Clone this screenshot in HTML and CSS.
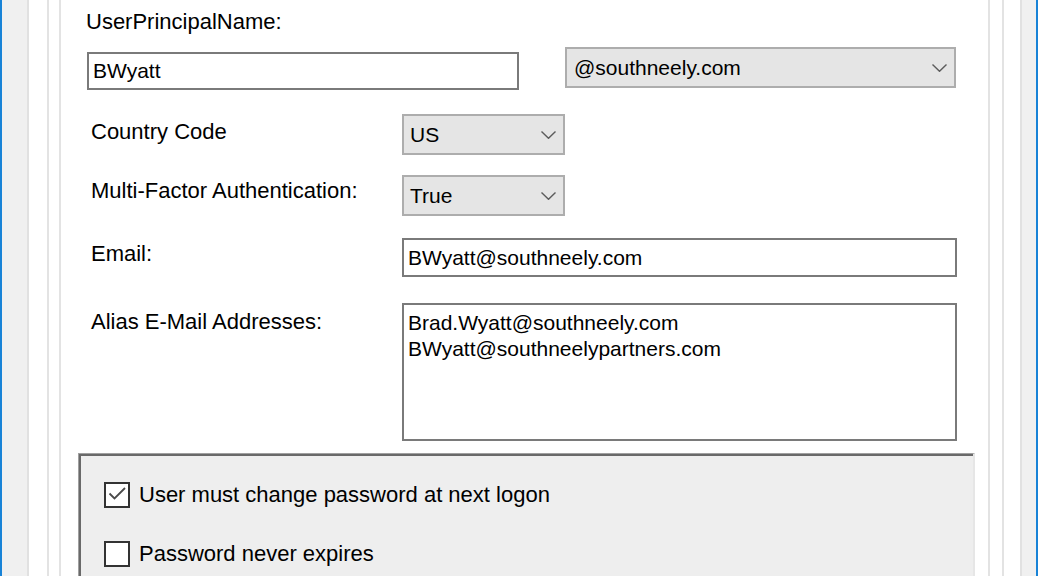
FILE: index.html
```html
<!DOCTYPE html>
<html>
<head>
<meta charset="utf-8">
<link rel="stylesheet" href="styles.css">
</head>
<body>
<div class="window">
  <div class="frame">
    <div class="group">
      <div class="content">
        <div class="upn-label">UserPrincipalName:</div>
        <div class="upn-row">
          <div class="textbox upn-box">BWyatt</div>
          <div class="combo domain-combo">
            <span>@southneely.com</span>
            <svg class="chev" width="15" height="8" viewBox="0 0 15 8"><polyline points="0.5,0.5 7.5,7.3 14.5,0.5"/></svg>
          </div>
        </div>
        <div class="field f-country">
          <div class="label">Country Code</div>
          <div class="combo small-combo">
            <span>US</span>
            <svg class="chev" width="15" height="8" viewBox="0 0 15 8"><polyline points="0.5,0.5 7.5,7.3 14.5,0.5"/></svg>
          </div>
        </div>
        <div class="field f-mfa">
          <div class="label">Multi-Factor Authentication:</div>
          <div class="combo small-combo">
            <span>True</span>
            <svg class="chev" width="15" height="8" viewBox="0 0 15 8"><polyline points="0.5,0.5 7.5,7.3 14.5,0.5"/></svg>
          </div>
        </div>
        <div class="field f-email">
          <div class="label">Email:</div>
          <div class="textbox wide-box">BWyatt@southneely.com</div>
        </div>
        <div class="field f-alias">
          <div class="label">Alias E-Mail Addresses:</div>
          <div class="textarea">
            <div>Brad.Wyatt@southneely.com</div>
            <div>BWyatt@southneelypartners.com</div>
          </div>
        </div>
        <div class="options">
          <div class="check">
            <span class="box"><svg width="22" height="22" viewBox="0 0 22 22"><polyline points="3.5,9.5 8.5,14.5 19,4"/></svg></span>
            <span>User must change password at next logon</span>
          </div>
          <div class="check second">
            <span class="box"></span>
            <span>Password never expires</span>
          </div>
        </div>
      </div>
    </div>
  </div>
</div>
</body>
</html>
```
FILE: styles.css
```css
html, body {
  margin: 0;
  height: 100%;
}
body {
  background: #f0f0f0;
  font-family: "Liberation Sans", Arial, sans-serif;
  font-size: 21px;
  color: #000;
  overflow: hidden;
}
.window {
  height: 576px;
  box-sizing: border-box;
  border-left: 2px solid #1883d7;
  border-right: 2px solid #1883d7;
  padding: 0 14px 0 25px;
  display: flex;
}
.frame {
  flex: 1;
  display: flex;
  background: #fff;
  border-left: 2px solid #e1e1e1;
  border-right: 2px solid #e1e1e1;
  padding: 0 16px 0 18px;
}
.group {
  flex: 1;
  display: flex;
  border-left: 2px solid #e3e3e3;
  border-right: 2px solid #e3e3e3;
  padding: 0 12px 0 10px;
}
.content {
  flex: 1;
  display: flex;
  flex-direction: column;
  border-left: 2px solid #e3e3e3;
  border-right: 2px solid #e3e3e3;
  padding: 0 13px 0 17px;
}
.upn-label {
  padding: 10px 0 0 8px;
  height: 24px;
  line-height: 24px;
  font-size: 22px;
}
.upn-row {
  display: flex;
  align-items: flex-start;
  margin-top: 13px;
}
.textbox {
  box-sizing: border-box;
  border: 2px solid #7a7a7a;
  background: #fff;
  padding-left: 4px;
  display: flex;
  align-items: center;
}
.upn-box {
  margin: 5px 0 0 9px;
  width: 432px;
  height: 38px;
}
.combo {
  box-sizing: border-box;
  border: 2px solid #adadad;
  background: #e5e5e5;
  display: flex;
  align-items: center;
  justify-content: space-between;
  padding: 0 7px 0 7px;
  height: 41px;
}
.domain-combo {
  margin-left: 46px;
  width: 391px;
}
.small-combo {
  width: 163px;
  padding-left: 6px;
}
.chev polyline {
  fill: none;
  stroke: #5c5c5c;
  stroke-width: 1.4;
}
.field {
  display: flex;
  align-items: flex-start;
  padding-left: 13px;
}
.label {
  width: 311px;
  line-height: 24px;
  font-size: 22px;
}
.f-country { margin-top: 24px; }
.f-country .label { margin-top: 6px; }
.f-mfa { margin-top: 20px; }
.f-mfa .label { margin-top: 4px; }
.f-email { margin-top: 22px; }
.f-email .label { margin-top: 4px; }
.f-alias { margin-top: 26px; }
.f-alias .label { margin-top: 7px; }
.wide-box {
  width: 555px;
  height: 39px;
}
.textarea {
  box-sizing: border-box;
  width: 555px;
  height: 138px;
  border: 2px solid #7a7a7a;
  background: #fff;
  padding: 5px 4px;
  line-height: 26px;
}
.options {
  flex: 1;
  margin-top: 12px;
  background: #eeeeee;
  border-top: 1px solid #a0a0a0;
  border-left: 1px solid #a0a0a0;
  border-right: 2px solid #e6e6e6;
  box-shadow: inset 2px 2px 0 #696969;
  padding: 28px 0 0 25px;
  font-size: 22px;
}
.check {
  display: flex;
  align-items: center;
  gap: 9px;
  height: 26px;
}
.check.second {
  margin-top: 33px;
}
.box {
  box-sizing: border-box;
  width: 26px;
  height: 26px;
  border: 2px solid #333;
  background: #fff;
  display: block;
}
.box svg {
  display: block;
}
.box polyline {
  fill: none;
  stroke: #4a4a4a;
  stroke-width: 1.8;
}
```
